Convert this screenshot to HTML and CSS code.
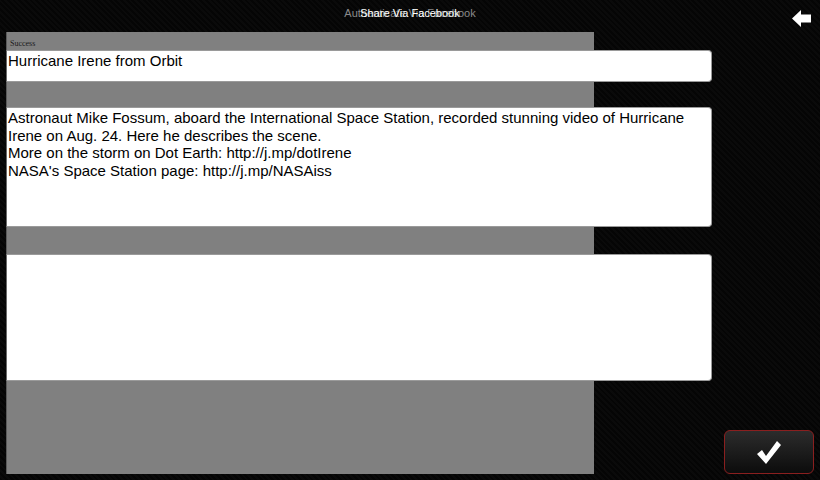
FILE: index.html
```html
<!DOCTYPE html>
<html>
<head>
<meta charset="utf-8">
<link rel="stylesheet" href="styles.css">
</head>
<body>
<div class="screen">
  <header class="topbar">
    <div class="title">
      <span class="title-back">Authenticate Via Facebook</span>
      <span class="title-front">Share Via Facebook</span>
    </div>
    <button class="back" aria-label="Back">
      <svg width="19" height="17" viewBox="0 0 19 17"><path d="M0 8.5 L9 0 L9 4.5 L19 4.5 L19 12.5 L9 12.5 L9 17 Z" fill="#fff"/></svg>
    </button>
  </header>
  <main class="main">
    <div class="stack">
      <div class="panel"></div>
      <div class="fields">
        <div class="status">Success</div>
        <div class="field field-title">Hurricane Irene from Orbit</div>
        <div class="field field-desc">Astronaut Mike Fossum, aboard the International Space Station, recorded stunning video of Hurricane Irene on Aug. 24. Here he describes the scene.<br>More on the storm on Dot Earth: http://j.mp/dotIrene<br>NASA's Space Station page: http://j.mp/NASAiss</div>
        <div class="field field-msg"></div>
      </div>
    </div>
    <button class="ok" aria-label="OK">
      <svg width="26" height="25" viewBox="0 0 26 25"><path d="M1 14 L6 10 L10 16 L21 1 L25 5 L10 24 Z" fill="#fff"/></svg>
    </button>
  </main>
</div>
</body>
</html>
```
FILE: styles.css
```css
* { box-sizing: border-box; }
html, body { margin: 0; padding: 0; }
body {
  width: 820px;
  height: 480px;
  overflow: hidden;
  background-color: #070707;
  background-image: repeating-linear-gradient(45deg, #050505 0 2px, #0a0a0a 2px 4px);
  font-family: "Liberation Sans", Arial, sans-serif;
}
.screen { width: 820px; height: 480px; display: flex; flex-direction: column; }
.topbar {
  height: 32px;
  display: flex;
  align-items: center;
  justify-content: center;
  position: relative;
}
.title { display: grid; justify-items: center; margin-top: -6px; }
.title > span { grid-area: 1 / 1; font-size: 11px; white-space: nowrap; }
.title-back { color: #8a8a8a; }
.title-front { color: #fff; }
.back {
  position: absolute;
  right: 9px;
  top: 10px;
  background: none;
  border: 0;
  padding: 0;
  width: 19px;
  height: 17px;
  display: block;
}
.back svg { display: block; }
.main {
  display: flex;
  align-items: flex-end;
  padding-left: 6px;
}
.stack { display: grid; }
.panel {
  grid-area: 1 / 1;
  width: 588px;
  height: 442px;
  background: #808080;
  border-left: 1px solid #5a5a5a;
}
.fields {
  grid-area: 1 / 1;
  width: 706px;
  display: flex;
  flex-direction: column;
  align-self: start;
}
.status {
  font-family: "Liberation Serif", "Times New Roman", serif;
  font-size: 8px;
  color: #1a1a1a;
  height: 18px;
  padding: 8px 0 0 4px;
  line-height: 8px;
}
.field {
  background: #fff;
  border: 1px solid #9a9a9a;
  border-left-color: #6a6a6a;
  border-radius: 0 4px 4px 0;
  color: #000;
  font-size: 15px;
  line-height: 17.5px;
  padding: 1px 0 0 1px;
}
.field-title { height: 32px; }
.field-desc { height: 120px; margin-top: 25px; }
.field-msg { height: 127px; margin-top: 27px; }
.ok {
  margin-left: 12px;
  width: 90px;
  height: 44px;
  padding: 0;
  border: 1px solid #8a1f1f;
  border-radius: 6px;
  background: linear-gradient(#2c2c2c, #0c0c0c);
  display: flex;
  align-items: center;
  justify-content: center;
}
.ok svg { display: block; }
```
